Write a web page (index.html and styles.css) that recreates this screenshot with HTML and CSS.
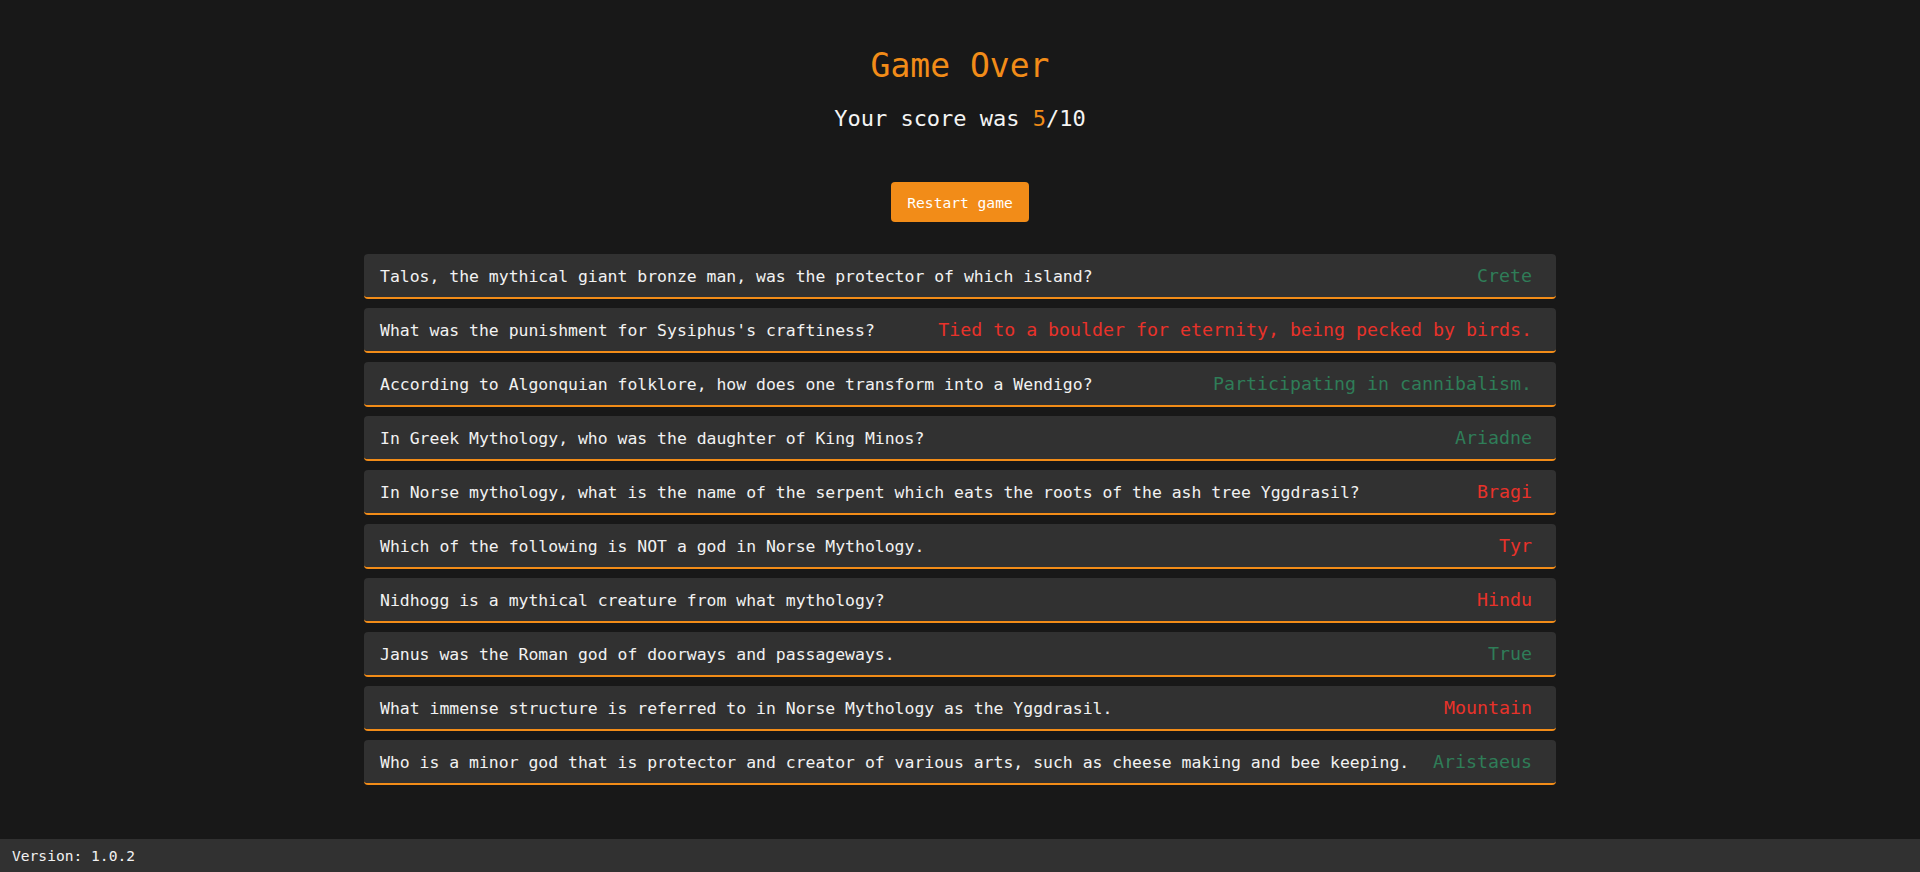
FILE: index.html
```html
<!DOCTYPE html>
<html lang="en">
<head>
<meta charset="utf-8">
<title>Game Over</title>
<link rel="stylesheet" href="styles.css">
</head>
<body>
<main class="page">
  <h1 class="title">Game Over</h1>
  <h2 class="score">Your score was <span class="score-num">5</span>/10</h2>
  <button class="restart" type="button">Restart game</button>
  <ul class="results">
    <li class="row"><span class="q">Talos, the mythical giant bronze man, was the protector of which island?</span><span class="a correct">Crete</span></li>
    <li class="row"><span class="q">What was the punishment for Sysiphus's craftiness?</span><span class="a wrong">Tied to a boulder for eternity, being pecked by birds.</span></li>
    <li class="row"><span class="q">According to Algonquian folklore, how does one transform into a Wendigo?</span><span class="a correct">Participating in cannibalism.</span></li>
    <li class="row"><span class="q">In Greek Mythology, who was the daughter of King Minos?</span><span class="a correct">Ariadne</span></li>
    <li class="row"><span class="q">In Norse mythology, what is the name of the serpent which eats the roots of the ash tree Yggdrasil?</span><span class="a wrong">Bragi</span></li>
    <li class="row"><span class="q">Which of the following is NOT a god in Norse Mythology.</span><span class="a wrong">Tyr</span></li>
    <li class="row"><span class="q">Nidhogg is a mythical creature from what mythology?</span><span class="a wrong">Hindu</span></li>
    <li class="row"><span class="q">Janus was the Roman god of doorways and passageways.</span><span class="a correct">True</span></li>
    <li class="row"><span class="q">What immense structure is referred to in Norse Mythology as the Yggdrasil.</span><span class="a wrong">Mountain</span></li>
    <li class="row"><span class="q">Who is a minor god that is protector and creator of various arts, such as cheese making and bee keeping.</span><span class="a correct">Aristaeus</span></li>
  </ul>
</main>
<footer class="footer">Version: 1.0.2</footer>
</body>
</html>
```
FILE: styles.css
```css
html, body {
  margin: 0;
  padding: 0;
}
body {
  background: #181818;
  color: #f2f2f2;
  font-family: "DejaVu Sans Mono", "Liberation Mono", monospace;
  min-height: 872px;
}
.page {
  display: flex;
  flex-direction: column;
  align-items: center;
  padding-top: 46px;
}
.title {
  margin: 0;
  font-size: 33px;
  line-height: 40px;
  font-weight: normal;
  color: #f28c18;
}
.score {
  margin: 19px 0 0;
  font-size: 22px;
  line-height: 28px;
  font-weight: normal;
  color: #f4f4f4;
}
.score-num {
  color: #f28c18;
}
.restart {
  margin-top: 49px;
  height: 40px;
  padding: 0 16px;
  border: none;
  border-radius: 4px;
  background: #f28c18;
  color: #ffffff;
  font-family: "DejaVu Sans Mono", "Liberation Mono", monospace;
  font-size: 14.6px;
  cursor: pointer;
}
.results {
  list-style: none;
  margin: 32px 0 0;
  padding: 0;
  width: 1192px;
  display: flex;
  flex-direction: column;
  gap: 9px;
}
.row {
  display: flex;
  justify-content: space-between;
  align-items: baseline;
  gap: 16px;
  height: 45px;
  box-sizing: border-box;
  background: #313131;
  border-radius: 4px;
  border-bottom: 2px solid #f28c18;
  padding: 12px 24px 10px 16px;
  font-size: 16.45px;
  line-height: 21px;
  color: #f2f2f2;
  white-space: nowrap;
}
.a {
  font-size: 18.27px;
  line-height: 19.7px;
}
.correct {
  color: #2f7d58;
}
.wrong {
  color: #e8322a;
}
.footer {
  position: fixed;
  left: 0;
  right: 0;
  bottom: 0;
  height: 33px;
  box-sizing: border-box;
  padding: 1px 12px 0;
  background: #313131;
  color: #f2f2f2;
  font-size: 14.6px;
  line-height: 32px;
}
```
